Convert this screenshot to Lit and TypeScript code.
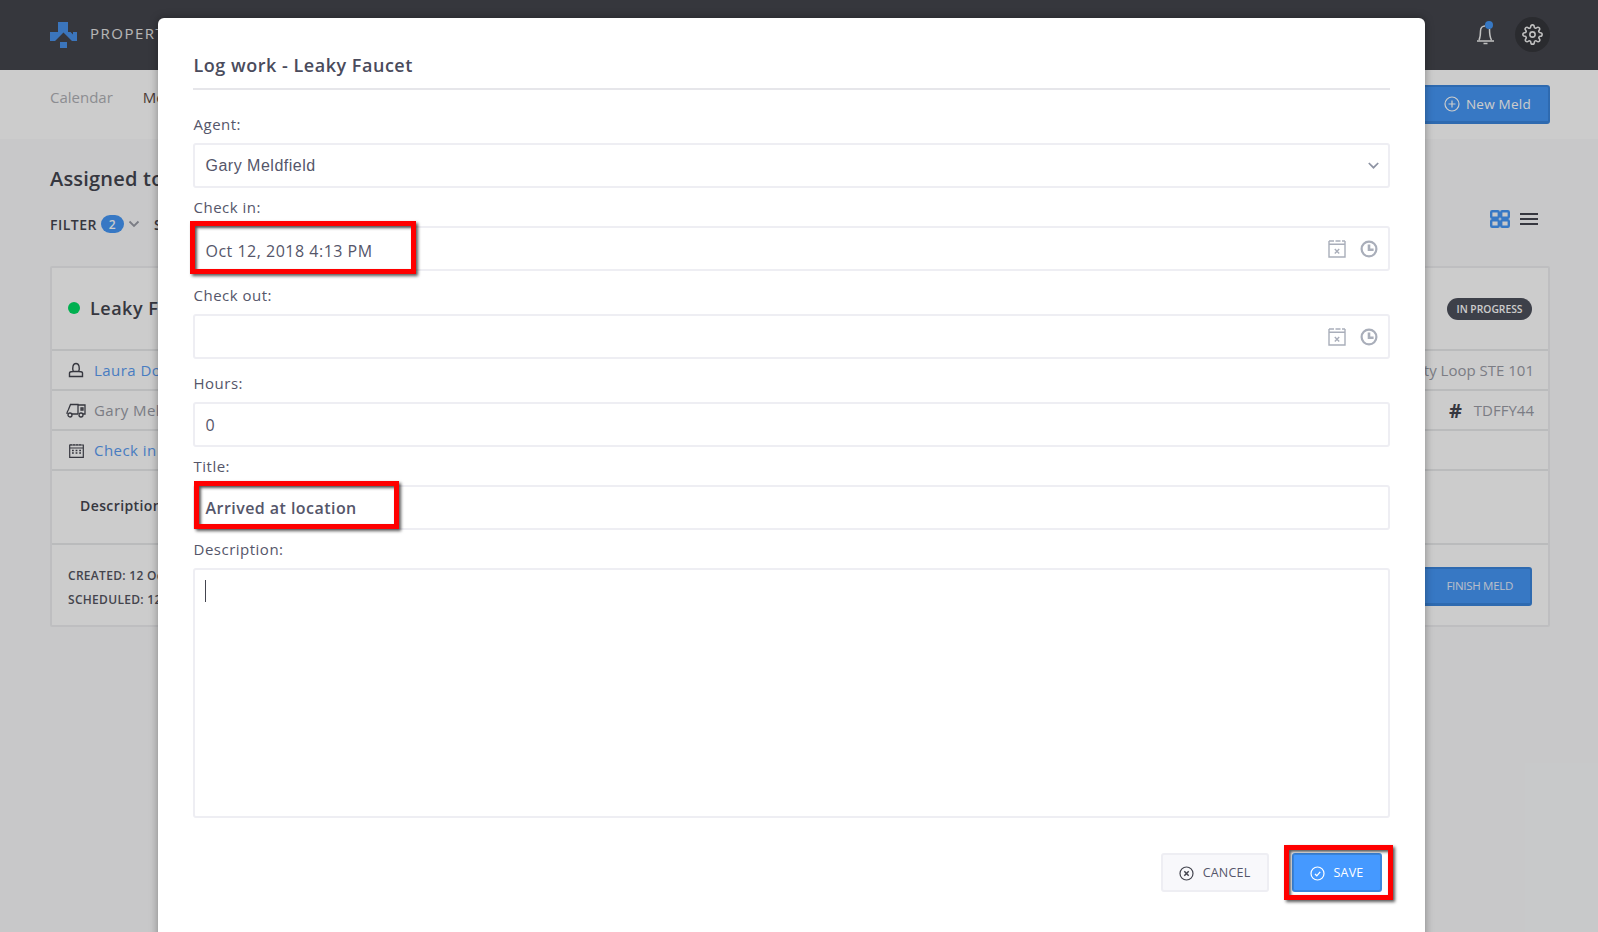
import { LitElement, html, css, svg } from "lit";
import { customElement } from "lit/decorators.js";

const calX = svg`<svg class="ic" width="18" height="18" viewBox="0 0 18 18" fill="none" stroke="#a9aeba" stroke-width="1.4"><path d="M1 4.2h16M1 1v16h16V1"/><path d="M1 1h16" stroke-dasharray="5 1.5"/><path d="M6.8 9l4.4 4.4M11.2 9l-4.4 4.4"/></svg>`;
const clock = svg`<svg class="ic" width="18" height="18" viewBox="0 0 18 18" fill="none" stroke="#a9aeba" stroke-width="2.2"><circle cx="9" cy="9" r="7.400"/><path d="M9 4.600V9.800H13.600" stroke-width="2.600"/></svg>`;

@customElement("app-root")
export class AppRoot extends LitElement {
  static styles = css`
    :host { display: block; position: relative; width: 1598px; height: 932px; overflow: hidden; background: #fafbfc; font-family: "Open Sans", sans-serif; color: #44454f; }
    * { box-sizing: border-box; }
    .top { height: 70px; background: #44454d; display: flex; align-items: center; padding: 0 48px 0 50px; }
    .logo { display: block; margin-right: 13px; }
    .brand { color: #e4e4e4; font-size: 15px; letter-spacing: 1.500px; position: relative; top: -2px; }
    .top-r { margin-left: auto; display: flex; align-items: center; gap: 17px; position: relative; top: -1px; }
    .bell { position: relative; display: block; width: 24px; height: 28px; top: -1px; }
    .gear { width: 35px; height: 35px; border-radius: 50%; background: #35363b; display: flex; align-items: center; justify-content: center; }
    .nav { height: 69px; background: #fff; display: flex; align-items: center; padding: 0 48px 0 50px; border-bottom: 0; }
    .nav a { font-size: 15px; margin-right: 30px; color: #b0b1b6; position: relative; top: -8px; }
    .nav a.on { color: #5c4a44; }
    .new { margin-left: auto; height: 39px; width: 150px; background: #4597f5; border: 2px solid #3a85dc; border-bottom-width: 3px; border-radius: 3px; color: #fff; font-size: 13.500px; font-weight: 400; letter-spacing: .25px; display: flex; align-items: center; justify-content: flex-end; padding-right: 17px; gap: 6px; }
    .main { padding: 0 48px 0 50px; }
    h2 { margin: 26px 0 0; font-size: 20px; line-height: 28px; font-weight: 600; color: #44454f; letter-spacing: .2px; }
    .filter { margin-top: 21px; height: 20px; display: flex; align-items: center; font-size: 14px; font-weight: 600; letter-spacing: .5px; }
    .badge { margin-left: 4px; width: 23px; height: 18px; border-radius: 9px; background: #4597f5; color: #fff; font-size: 12px; display: flex; align-items: center; justify-content: center; }
    .chev { margin: 0 14px 0 4px; }
    .views { margin-left: auto; display: flex; align-items: center; gap: 10px; padding-right: 12px; position: relative; top: -5px; }
    .card { margin-top: 32px; height: 361px; background: #fff; border: 2px solid #eeeef0; border-radius: 2px; display: flex; flex-direction: column; }
    .c-head { height: 83px; display: flex; align-items: center; justify-content: space-between; padding: 0 16px 0 16px; border-bottom: 2px solid #e9eaec; }
    .c-title { display: flex; align-items: center; gap: 10px; font-size: 18px; font-weight: 600; letter-spacing: .5px; position: relative; top: -1px; }
    .dot { width: 12px; height: 12px; border-radius: 50%; background: #00dc64; }
    .pill { width: 85px; height: 22px; border-radius: 11px; background: #4d505c; color: #fff; font-size: 10.300px; font-weight: 600; display: flex; align-items: center; justify-content: center; }
    .row { height: 40px; flex: none; display: flex; align-items: center; justify-content: space-between; padding: 0 14px 0 16px; border-bottom: 2px solid #e9eaec; font-size: 15px; color: #9a9ca6; }
    .row-l { display: flex; align-items: center; letter-spacing: .45px; }
    .row-r { display: flex; align-items: center; }
    .row-ic { width: 26px; margin-right: 5px; display: flex; justify-content: center; margin-left: -5px; }
    .link { color: #5a9cf2; }
    .hash { font-size: 20px; font-weight: 700; color: #44454f; margin-right: 12px; }
    .desc { height: 74px; flex: none; padding: 25px 0 0 28px; border-bottom: 2px solid #e9eaec; font-size: 14px; font-weight: 600; letter-spacing: .4px; }
    .foot { flex: 1; display: flex; align-items: center; justify-content: space-between; padding: 0 16px; font-size: 12px; font-weight: 600; letter-spacing: .3px; line-height: 24px; color: #55565f; }
    .dates { padding-top: 5px; }
    .finish { width: 150px; height: 39px; background: #4597f5; border: 2px solid #3a85dc; border-bottom-width: 3px; border-radius: 3px; color: #e9eefc; font-size: 11.500px; font-weight: 400; letter-spacing: -.3px; display: flex; align-items: center; justify-content: flex-end; padding-right: 17px; position: relative; top: 1px; }

    .veil { position: absolute; inset: 0; background: rgba(0, 0, 0, .2); }
    .modal { position: absolute; left: 158px; top: 18px; width: 1267px; height: 960px; background: #fff; border-radius: 6px; padding: 0 35px; box-shadow: 0 0 8px rgba(0, 0, 0, .35); }
    .m-head { padding: 34px 0 0 .5px; height: 72px; border-bottom: 2px solid #e6e6ea; font-size: 18px; line-height: 26px; font-weight: 600; color: #4a4b5c; letter-spacing: .52px; margin-bottom: 24px; }
    .field { margin-bottom: 9px; }
    .field.wide { margin-bottom: 14px; }
    .lab { display: block; padding-left: .5px; font-size: 15px; line-height: 20px; color: #55566a; letter-spacing: .5px; margin-bottom: 9px; }
    .box { position: relative; height: 45px; border: 2px solid #eeeef3; border-radius: 3px; display: flex; align-items: center; padding: 0 10.500px; font-size: 16px; color: #55566a; background: #fff; }
    .val { letter-spacing: .5px; }
    .low { position: relative; top: 2px; }
    .sel { font-family: "Liberation Sans", Arial, sans-serif; letter-spacing: .5px; }
    .bold { font-weight: 600; font-size: 16px; letter-spacing: .45px; }
    .box-ic { margin-left: auto; display: flex; gap: 14px; align-items: center; margin-right: 0; }
    .box-ic.down { margin-right: -1px; }
    .area { height: 250px; align-items: flex-start; padding-top: 10px; padding-left: 10px; }
    .caret { width: 1px; height: 22px; background: #44454f; }
    .actions { margin-top: 35px; display: flex; justify-content: flex-end; gap: 23px; padding-right: 8px; }
    .btn { position: relative; height: 39px; border-radius: 3px; display: flex; align-items: center; justify-content: center; gap: 8px; font-size: 12.500px; letter-spacing: .2px; }
    .btn svg { position: relative; top: 1px; left: -1px; }
    .cancel { width: 108px; background: #f8f8fb; border: 2px solid #eeeef3; color: #55566a; }
    .save { width: 90px; background: #4599ff; border: 2px solid #3b86dd; color: #fff; font-weight: 500; }
    .mark { position: absolute; border: 5px solid #f00; box-shadow: 2px 2px 3px rgba(0, 0, 0, .65), inset 2px 2px 3px rgba(0, 0, 0, .65); pointer-events: none; }
    .m1 { left: -5px; top: -7px; width: 226px; height: 53px; }
    .m2 { left: -1px; top: -6px; width: 205px; height: 48px; }
    .m3 { left: -10px; top: -10px; width: 109px; height: 55px; }
  `;

  render() {
    return html`
      <div class="top">
        <svg class="logo" width="27" height="26" viewBox="0 0 27 26"><path fill="#4a93ec" d="M0 10h8V0h10v10h9v9h-5l-8.500-8.500L5 19H0z"/><path fill="#44454d" d="M20 9.500h3v3z"/><rect fill="#4a93ec" x="10" y="20" width="7" height="6"/></svg>
        <span class="brand">PROPERTY MELD</span>
        <div class="top-r">
          <svg class="bell" viewBox="0 0 24 28" fill="none" stroke="#f2f2f2" stroke-width="1.500"><path d="M5 21c1-2 1.500-5 1.500-9 0-3 2-5 4.500-5M15.500 10c0 5 .5 8.500 2 11M3 22h17"/><path d="M9.500 24.500h4"/><circle cx="15" cy="6" r="4" fill="#4597f5" stroke="none"/></svg>
          <div class="gear"><svg width="21" height="21" viewBox="0 0 24 24" fill="none" stroke="#f0f0f0" stroke-width="1.800" stroke-linejoin="round"><circle cx="12" cy="12" r="3"/><path d="M19.400 15a1.650 1.650 0 0 0 .33 1.820l.06.06a2 2 0 1 1-2.830 2.830l-.06-.06a1.650 1.650 0 0 0-2.820 1.170V21a2 2 0 1 1-4 0v-.09a1.650 1.650 0 0 0-2.830-1.200l-.06.06a2 2 0 1 1-2.830-2.830l.06-.06a1.650 1.650 0 0 0-1.170-2.820H3a2 2 0 1 1 0-4h.09a1.650 1.650 0 0 0 1.200-2.830l-.06-.06a2 2 0 1 1 2.830-2.830l.06.06a1.650 1.650 0 0 0 2.820-1.170V3a2 2 0 1 1 4 0v.09a1.650 1.650 0 0 0 2.830 1.200l.06-.06a2 2 0 1 1 2.830 2.830l-.06.06a1.650 1.650 0 0 0 1.170 2.820H21a2 2 0 1 1 0 4h-.09a1.650 1.650 0 0 0-1.510 1.060z"/></svg></div>
        </div>
      </div>
      <div class="nav">
        <a>Calendar</a><a class="on">Melds</a>
        <div class="new"><svg width="16" height="16" viewBox="0 0 16 16" fill="none" stroke="#fff" stroke-width="1.200"><circle cx="8" cy="8" r="7"/><path d="M8 4.500v7M4.500 8h7"/></svg>New Meld</div>
      </div>
      <div class="main">
        <h2>Assigned to me</h2>
        <div class="filter">FILTER<span class="badge">2</span>
          <svg class="chev" width="12" height="8" viewBox="0 0 12 8" fill="none" stroke="#9a9ca6" stroke-width="1.800"><path d="M1.500 1.500 6 6l4.500-4.500"/></svg><span>SORT</span>
          <div class="views">
            <svg width="20" height="18" viewBox="0 0 20 18" fill="none" stroke="#4597f5" stroke-width="2.400"><rect x="1.200" y="1.200" width="7.600" height="6.600" rx="1"/><rect x="11.200" y="1.200" width="7.600" height="6.600" rx="1"/><rect x="1.200" y="10.200" width="7.600" height="6.600" rx="1"/><rect x="11.200" y="10.200" width="7.600" height="6.600" rx="1"/></svg>
            <svg width="18" height="14" viewBox="0 0 18 14" fill="none" stroke="#44454f" stroke-width="2.200"><path d="M0 2h18M0 7h18M0 12h18"/></svg>
          </div>
        </div>
        <div class="card">
          <div class="c-head"><div class="c-title"><span class="dot"></span>Leaky Faucet</div><span class="pill">IN PROGRESS</span></div>
          <div class="row"><div class="row-l"><span class="row-ic"><svg width="16" height="16" viewBox="0 0 16 16" fill="none" stroke="#44454f" stroke-width="1.400"><path d="M5.300 9.500c-1.200-3.500-.5-8 2.700-8s3.900 4.500 2.700 8M1.500 11c0-1 1-1.500 3.800-1.500h5.400c2.800 0 3.800.5 3.800 1.500v3.500h-13z"/></svg></span><span class="link">Laura Doe</span></div><span>1234 Property Loop STE 101</span></div>
          <div class="row"><div class="row-l"><span class="row-ic"><svg width="20" height="16" viewBox="0 0 20 16" fill="none" stroke="#44454f" stroke-width="1.300"><path d="M1 12c0-2 .5-3 1.500-4.500l2-5H12v9.500M12 3h7v9h-2M5.500 12H12"/><circle cx="4" cy="13" r="2"/><circle cx="15" cy="13" r="2"/><path d="M15 6h2v2h-2z"/></svg></span><span>Gary Meldfield</span></div><div class="row-r"><span class="hash">#</span><span>TDFFY44</span></div></div>
          <div class="row"><div class="row-l"><span class="row-ic"><svg width="15" height="15" viewBox="0 0 15 15" fill="none" stroke="#44454f" stroke-width="1.200"><path d="M.7 2h13.600v12.300H.7zM.7 5h13.600"/><path d="M3 7.500h1.800M6.600 7.500h1.800M10.200 7.500H12M3 10h1.800M6.600 10h1.800M10.200 10H12" stroke-width="1.600"/><path d="M2 1v1.500M5 1v1.500M8 1v1.500M11 1v1.500"/></svg></span><span class="link">Check in</span></div></div>
          <div class="desc">Description</div>
          <div class="foot"><div class="dates">CREATED: 12 Oct 2018<br />SCHEDULED: 12 Oct 2018</div><div class="finish">FINISH MELD</div></div>
        </div>
      </div>
      <div class="veil"></div>
      <div class="modal">
        <div class="m-head">Log work - Leaky Faucet</div>
        <div class="field"><span class="lab">Agent:</span>
          <div class="box"><span class="sel">Gary Meldfield</span><span class="box-ic down"><svg width="11" height="7" viewBox="0 0 11 7" fill="none" stroke="#8d93a3" stroke-width="1.700"><path d="M.8 1 5.500 5.700 10.200 1"/></svg></span></div></div>
        <div class="field wide"><span class="lab">Check in:</span>
          <div class="box"><span class="val low">Oct 12, 2018 4:13 PM</span><span class="box-ic">${calX}${clock}</span><span class="mark m1"></span></div></div>
        <div class="field wide"><span class="lab">Check out:</span>
          <div class="box"><span class="box-ic">${calX}${clock}</span></div></div>
        <div class="field"><span class="lab">Hours:</span>
          <div class="box"><span class="val">0</span></div></div>
        <div class="field"><span class="lab">Title:</span>
          <div class="box"><span class="val bold">Arrived at location</span><span class="mark m2"></span></div></div>
        <div class="field"><span class="lab">Description:</span>
          <div class="box area"><span class="caret"></span></div></div>
        <div class="actions">
          <div class="btn cancel"><svg width="15" height="15" viewBox="0 0 15 15" fill="none" stroke="#44454f" stroke-width="1.200"><circle cx="7.500" cy="7.500" r="6.500"/><path d="M5.300 5.300l4.400 4.400M9.700 5.300l-4.400 4.400" stroke-width="1.500"/></svg>CANCEL</div>
          <div class="btn save"><svg width="15" height="15" viewBox="0 0 15 15" fill="none" stroke="#fff" stroke-width="1.200"><circle cx="7.500" cy="7.500" r="6.500"/><path d="M5 8l1.800 1.800L10.200 5.800" stroke-width="1.300"/></svg>SAVE<span class="mark m3"></span></div>
        </div>
      </div>
    `;
  }
}
